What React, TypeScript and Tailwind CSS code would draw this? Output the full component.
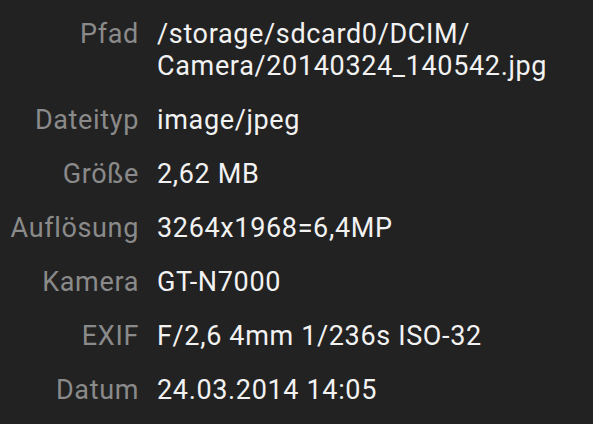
const rows: { label: string; value: React.ReactNode }[] = [
  {
    label: "Pfad",
    value: (
      <>
        /storage/sdcard0/DCIM/
        <br />
        Camera/20140324_140542.jpg
      </>
    ),
  },
  { label: "Dateityp", value: "image/jpeg" },
  { label: "Größe", value: "2,62 MB" },
  { label: "Auflösung", value: "3264x1968=6,4MP" },
  { label: "Kamera", value: "GT-N7000" },
  { label: "EXIF", value: "F/2,6 4mm 1/236s ISO-32" },
  { label: "Datum", value: "24.03.2014 14:05" },
];

export default function App() {
  return (
    <div
      className="w-[593px] h-[424px] bg-[#222222] overflow-hidden pt-[18px]"
      style={{ fontFamily: "Roboto, 'Liberation Sans', sans-serif" }}
    >
      <div className="grid grid-cols-[139px_1fr] gap-x-[18px] gap-y-[22px] text-[27px] leading-[32px] tracking-[0.65px]">
        {rows.map((r) => (
          <div key={r.label} className="contents">
            <div className="text-right text-[#8a8a8a]">{r.label}</div>
            <div className="text-[#f2f2f2]">{r.value}</div>
          </div>
        ))}
      </div>
    </div>
  );
}
